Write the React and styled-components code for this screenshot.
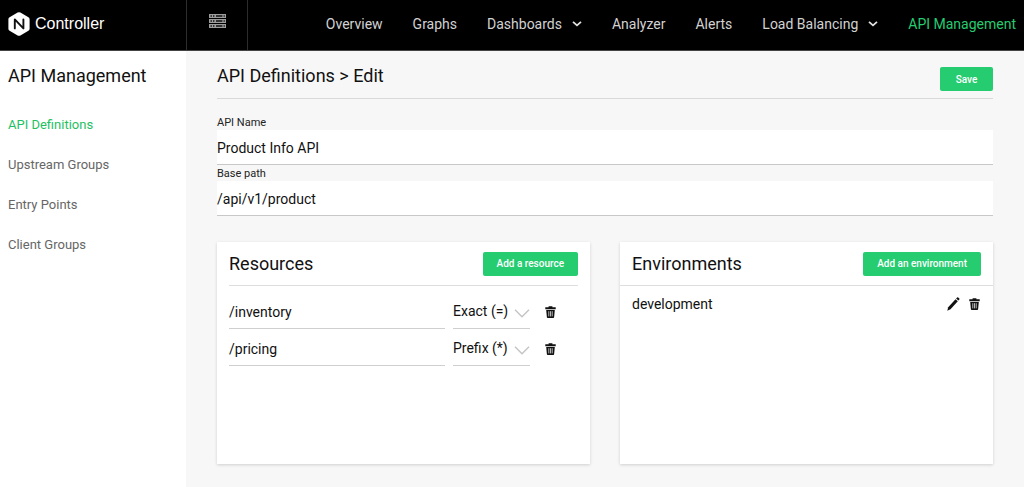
import React from 'react';
import styled, { createGlobalStyle } from 'styled-components';

const GlobalStyle = createGlobalStyle`
  * {
    box-sizing: border-box;
  }

  body {
    margin: 0;
    background: #f7f7f7;
    color: #111;
    font-family: Roboto, "Liberation Sans", sans-serif;
  }

  h1, h2 {
    margin: 0;
    font-weight: 400;
  }
`;

const navItems = [
  { label: 'Overview' },
  { label: 'Graphs' },
  { label: 'Dashboards', menu: true },
  { label: 'Analyzer' },
  { label: 'Alerts' },
  { label: 'Load Balancing', menu: true },
  { label: 'API Management', active: true },
];

const sideItems = ['API Definitions', 'Upstream Groups', 'Entry Points', 'Client Groups'];

const resources = [
  { path: '/inventory', match: 'Exact (=)' },
  { path: '/pricing', match: 'Prefix (*)' },
];

const environments = ['development'];

const LogoMark = () => (
  <svg width="22" height="24" viewBox="0 0 22 24" aria-hidden="true">
    <path
      d="M9.6 0.6a2.8 2.8 0 0 1 2.8 0l8 4.6a2.4 2.4 0 0 1 1.2 2.1v9.4a2.4 2.4 0 0 1-1.2 2.1l-8 4.6a2.8 2.8 0 0 1-2.8 0l-8-4.6a2.4 2.4 0 0 1-1.2-2.1v-9.4a2.4 2.4 0 0 1 1.2-2.1z"
      fill="#fff"
    />
    <path d="M6.8 16.4V7.4L15.4 16.4V7.4" fill="none" stroke="#111" strokeWidth="1.9" strokeLinecap="round" strokeLinejoin="round" />
  </svg>
);

const ServersIcon = () => (
  <svg width="17" height="14" viewBox="0 0 17 14" aria-hidden="true">
    {[0, 5, 10].map((y) => (
      <g key={y}>
        <rect y={y} width="17" height="4" fill="#9c9c9c" />
        <path d={`M1.5 ${y + 2}h1.4M4 ${y + 2}h1.4M7 ${y + 2}h6.4M14.6 ${y + 2}h1.2`} stroke="#111" strokeWidth="1.6" />
      </g>
    ))}
  </svg>
);

const CaretIcon = () => (
  <svg width="10" height="6" viewBox="0 0 10 6" fill="none" stroke="#e0e0e0" strokeWidth="1.8" aria-hidden="true">
    <path d="M1 0.8l4 3.6 4-3.6" />
  </svg>
);

const ChevronIcon = () => (
  <svg width="16" height="9" viewBox="0 0 16 9" fill="none" stroke="#c4c4c4" strokeWidth="1.4" aria-hidden="true">
    <path d="M1 0.8l7 6.9 7-6.9" />
  </svg>
);

const TrashIcon = () => (
  <svg width="11" height="12" viewBox="0 0 11 12" aria-hidden="true">
    <path d="M3.6 0.3h3.8v1h3.3v1.9H0.3V1.3h3.3z" fill="#111" />
    <path d="M1.2 4h8.6l-0.7 7.2a0.8 0.8 0 0 1-0.8 0.7H2.7a0.8 0.8 0 0 1-0.8-0.7z" fill="#111" />
    <path d="M3.8 5.2v5.2M5.5 5.2v5.2M7.2 5.2v5.2" stroke="#fff" strokeWidth="0.7" />
  </svg>
);

const PencilIcon = () => (
  <svg width="13" height="14" viewBox="0 0 13 14" fill="#111" aria-hidden="true">
    <path d="M0.3 13.7l0.9-3.5 7.3-8 2.3 2.1-7.3 8z" />
    <path d="M9.1 1.5l1-1.1a0.8 0.8 0 0 1 1.1 0l1.1 1a0.8 0.8 0 0 1 0 1.1l-1 1.1z" />
  </svg>
);

const App = () => {
  return (
    <>
      <GlobalStyle />
      <Header>
        <Brand href="#">
          <LogoMark />
          Controller
        </Brand>
        <ServersButton type="button" aria-label="Instances">
          <ServersIcon />
        </ServersButton>
        <Nav>
          {navItems.map((item) => (
            <NavLink key={item.label} href="#" $active={item.active}>
              {item.label}
              {item.menu && <CaretIcon />}
            </NavLink>
          ))}
        </Nav>
      </Header>
      <Page>
        <Sidebar>
          <SideTitle>API Management</SideTitle>
          <SideNav>
            {sideItems.map((label, i) => (
              <SideLink key={label} href="#" $active={i === 0}>
                {label}
              </SideLink>
            ))}
          </SideNav>
        </Sidebar>
        <Main>
          <TitleBar>
            <Title>API Definitions &gt; Edit</Title>
            <Button type="button">Save</Button>
          </TitleBar>
          <Label htmlFor="api-name">API Name</Label>
          <Field id="api-name" defaultValue="Product Info API" />
          <Label htmlFor="base-path">Base path</Label>
          <Field id="base-path" defaultValue="/api/v1/product" />
          <Cards>
            <Card>
              <CardHeader $inset>
                <CardTitle>Resources</CardTitle>
                <Button type="button">Add a resource</Button>
              </CardHeader>
              <ResourceList>
                {resources.map(({ path, match }) => (
                  <ResourceRow key={path}>
                    <PathInput aria-label="Resource path" defaultValue={path} />
                    <SelectBox>
                      <Select aria-label="Match type" defaultValue={match}>
                        <option>Exact (=)</option>
                        <option>Prefix (*)</option>
                      </Select>
                      <ChevronIcon />
                    </SelectBox>
                    <IconButton type="button" aria-label={`Delete ${path}`}>
                      <TrashIcon />
                    </IconButton>
                  </ResourceRow>
                ))}
              </ResourceList>
            </Card>
            <Card>
              <CardHeader>
                <CardTitle>Environments</CardTitle>
                <Button type="button">Add an environment</Button>
              </CardHeader>
              {environments.map((name) => (
                <EnvironmentRow key={name}>
                  <EnvironmentName>{name}</EnvironmentName>
                  <IconButton type="button" aria-label={`Edit ${name}`}>
                    <PencilIcon />
                  </IconButton>
                  <IconButton type="button" aria-label={`Delete ${name}`}>
                    <TrashIcon />
                  </IconButton>
                </EnvironmentRow>
              ))}
            </Card>
          </Cards>
        </Main>
      </Page>
    </>
  );
};

const Header = styled.header`
  display: flex;
  height: 51px;
  background: #000;
  border-bottom: 1px solid #444;
`;

const Brand = styled.a`
  display: flex;
  align-items: center;
  gap: 5px;
  width: 186px;
  padding: 0 8px 3px;
  color: #fff;
  font-family: "Liberation Sans", Arial, sans-serif;
  font-size: 16px;
  text-decoration: none;
`;

const ServersButton = styled.button`
  display: flex;
  align-items: center;
  justify-content: center;
  width: 62px;
  padding: 0 0 8px;
  background: none;
  border: solid #2c2c2c;
  border-width: 0 1px;
  cursor: pointer;
`;

const Nav = styled.nav`
  display: flex;
  flex: 1;
  align-items: center;
  justify-content: flex-end;
  gap: 30px;
  padding: 0 8px 3px;
`;

const NavLink = styled.a`
  display: flex;
  align-items: center;
  gap: 10px;
  color: ${(p) => (p.$active ? '#25cc70' : '#d2d2d2')};
  font-size: 14px;
  white-space: nowrap;
  text-decoration: none;
`;

const Page = styled.div`
  display: grid;
  grid-template-columns: 186px 1fr;
  min-height: calc(100vh - 51px);
`;

const Sidebar = styled.aside`
  padding: 13px 8px;
  background: #fff;
`;

const SideTitle = styled.h2`
  font-size: 18px;
  line-height: 24px;
`;

const SideNav = styled.nav`
  display: flex;
  flex-direction: column;
  gap: 20px;
  margin-top: 27px;
`;

const SideLink = styled.a`
  color: ${(p) => (p.$active ? '#1fbf63' : '#666')};
  font-size: 13px;
  line-height: 20px;
  text-decoration: none;
`;

const Main = styled.main`
  padding: 13px 31px 22px;
`;

const TitleBar = styled.div`
  display: flex;
  align-items: flex-start;
  justify-content: space-between;
  height: 35px;
  margin-bottom: 16px;
  border-bottom: 1px solid #d9d9d9;

  button {
    margin-top: 3px;
  }
`;

const Title = styled.h1`
  font-size: 18px;
  line-height: 24px;
`;

const Button = styled.button`
  min-width: 53px;
  height: 24px;
  padding: 0 14px;
  background: #25cc70;
  border: 0;
  border-radius: 2px;
  color: #fff;
  font-family: inherit;
  font-size: 10px;
  font-weight: 500;
  cursor: pointer;
`;

const Label = styled.label`
  display: block;
  color: #222;
  font-size: 11px;
  line-height: 15px;
`;

const Field = styled.input`
  display: block;
  width: 100%;
  height: 35px;
  margin-bottom: 1px;
  padding: 2px 0 0;
  background: #fff;
  border: 0;
  border-bottom: 1px solid #c8c8c8;
  outline: none;
  color: #111;
  font-family: inherit;
  font-size: 14px;
`;

const Cards = styled.div`
  display: grid;
  grid-template-columns: 1fr 1fr;
  gap: 30px;
  margin-top: 26px;
`;

const Card = styled.section`
  min-height: 222px;
  background: #fff;
  box-shadow: 0 1px 3px rgba(0, 0, 0, 0.16);
`;

const CardHeader = styled.div`
  display: flex;
  align-items: center;
  justify-content: space-between;
  height: 44px;
  margin: ${(p) => (p.$inset ? '0 12px' : '0')};
  padding: ${(p) => (p.$inset ? '0' : '0 12px')};
  border-bottom: 1px solid #dedede;
`;

const CardTitle = styled.h2`
  font-size: 18px;
  line-height: 24px;
`;

const ResourceList = styled.div`
  padding: 6px 12px;
`;

const ResourceRow = styled.div`
  display: flex;
  align-items: flex-end;
  height: 37px;
`;

const PathInput = styled.input`
  flex: 1;
  min-width: 0;
  height: 33px;
  margin-right: 8px;
  padding: 0;
  background: none;
  border: 0;
  border-bottom: 1px solid #cfcfcf;
  outline: none;
  color: #111;
  font-family: inherit;
  font-size: 14px;
`;

const SelectBox = styled.div`
  position: relative;
  width: 77px;

  svg {
    position: absolute;
    top: 13px;
    right: 0;
    pointer-events: none;
  }
`;

const Select = styled.select`
  display: block;
  width: 100%;
  height: 33px;
  padding: 0 0 2px;
  appearance: none;
  background: none;
  border: 0;
  border-bottom: 1px solid #cfcfcf;
  border-radius: 0;
  outline: none;
  color: #111;
  font-family: inherit;
  font-size: 14px;
`;

const IconButton = styled.button`
  display: flex;
  padding: 0;
  background: none;
  border: 0;
  cursor: pointer;

  ${ResourceRow} & {
    margin: 0 22px 11px 15px;
  }
`;

const EnvironmentRow = styled.div`
  display: flex;
  align-items: center;
  gap: 9px;
  padding: 8px 13px 8px 12px;
`;

const EnvironmentName = styled.span`
  flex: 1;
  font-size: 14px;
  line-height: 20px;
`;

export default App;
